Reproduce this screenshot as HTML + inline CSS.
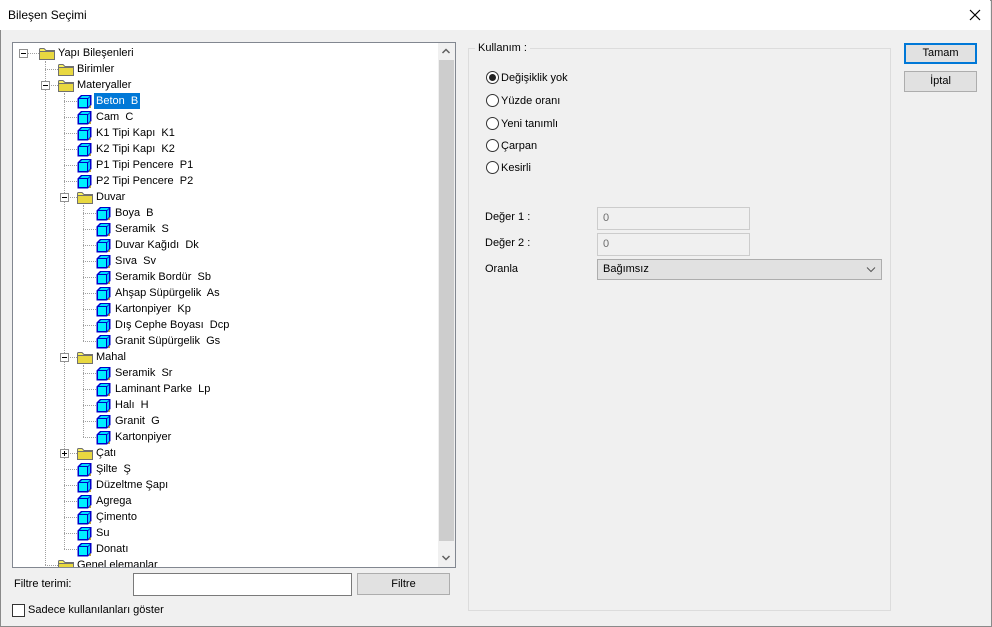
<!DOCTYPE html>
<html><head><meta charset="utf-8"><style>
body{margin:0;width:992px;height:627px;background:#f0f0f0;font-family:"Liberation Sans",sans-serif;font-size:11px;color:#000;position:relative;overflow:hidden}
.a{position:absolute}
#win{position:absolute;left:0;top:0;width:990px;height:625px;border:1px solid #8a8a8a}
#title{position:absolute;left:0;top:0;width:990px;height:30px;background:#fff}
#tree{position:absolute;left:12px;top:42px;width:442px;height:524px;background:#fff;border:1px solid #828790;overflow:hidden}
.row{position:absolute;height:16px;line-height:16px;white-space:pre}
.vl{position:absolute;border-left:1px dotted #a0a0a0;width:0}
.hl{position:absolute;border-top:1px dotted #a0a0a0;height:0}
.ex{position:absolute;width:7px;height:7px;border:1px solid #919191;background:#fff}
.ex:before{content:"";position:absolute;left:1px;top:3px;width:5px;height:1px;background:#000}
.ex.p:after{content:"";position:absolute;left:3px;top:1px;width:1px;height:5px;background:#000}
.btn{position:absolute;background:#e1e1e1;border:1px solid #adadad;text-align:center;box-sizing:border-box}
.inp{position:absolute;background:#fff;border:1px solid #7a7a7a;box-sizing:border-box}
.rad{position:absolute;width:13px;height:13px;border:1px solid #333;border-radius:50%;box-sizing:border-box;background:#fff}
</style></head><body>
<div id="win"></div>
<div id="title"></div>
<div class="a" style="left:8px;top:8px;font-size:12px">Bileşen Seçimi</div>
<svg class="a" style="left:969px;top:9px" width="12" height="12"><path d="M1 1L11 11M11 1L1 11" stroke="#000" stroke-width="1.2"/></svg>

<div id="tree"></div>
<div class="a" style="left:438px;top:43px;width:17px;height:524px;background:#f0f0f0"></div>
<div class="a" style="left:439px;top:60px;width:15px;height:481px;background:#cdcdcd"></div>
<svg class="a" style="left:441px;top:47px" width="10" height="8"><path d="M1.5 6L5 2.5L8.5 6" stroke="#606060" stroke-width="1.5" fill="none"/></svg>
<svg class="a" style="left:441px;top:554px" width="10" height="8"><path d="M1.5 2L5 5.5L8.5 2" stroke="#606060" stroke-width="1.5" fill="none"/></svg>

<div class="a" style="left:14px;top:578px">Filtre terimi:</div>
<div class="inp" style="left:133px;top:573px;width:219px;height:23px"></div>
<div class="btn" style="left:357px;top:573px;width:93px;height:22px;line-height:20px">Filtre</div>
<div class="a" style="left:12px;top:604px;width:13px;height:13px;border:1px solid #333;box-sizing:border-box;background:#fff"></div>
<div class="a" style="left:28px;top:604px">Sadece kullanılanları göster</div>

<div class="a" style="left:468px;top:48px;width:421px;height:561px;border:1px solid #dcdcdc"></div>
<div class="a" style="left:475px;top:42px;background:#f0f0f0;padding:0 3px">Kullanım :</div>
<div class="rad" style="left:486px;top:71px"></div><div class="a" style="left:489px;top:74px;width:7px;height:7px;border-radius:50%;background:#222"></div>
<div class="a" style="left:501px;top:72px">Değişiklik yok</div>
<div class="rad" style="left:486px;top:94px"></div><div class="a" style="left:501px;top:95px">Yüzde oranı</div>
<div class="rad" style="left:486px;top:117px"></div><div class="a" style="left:501px;top:118px">Yeni tanımlı</div>
<div class="rad" style="left:486px;top:139px"></div><div class="a" style="left:501px;top:140px">Çarpan</div>
<div class="rad" style="left:486px;top:161px"></div><div class="a" style="left:501px;top:162px">Kesirli</div>

<div class="a" style="left:485px;top:211px">Değer 1 :</div>
<div class="inp" style="left:597px;top:207px;width:153px;height:23px;border-color:#ccc;background:#f0f0f0;color:#6d6d6d;padding:4px 5px">0</div>
<div class="a" style="left:485px;top:237px">Değer 2 :</div>
<div class="inp" style="left:597px;top:233px;width:153px;height:23px;border-color:#ccc;background:#f0f0f0;color:#6d6d6d;padding:4px 5px">0</div>
<div class="a" style="left:485px;top:263px">Oranla</div>
<div class="inp" style="left:597px;top:259px;width:285px;height:21px;border-color:#adadad;background:#e1e1e1;padding:3px 5px">Bağımsız</div>
<svg class="a" style="left:866px;top:266px" width="10" height="7"><path d="M1 1.5L5 5.5L9 1.5" stroke="#555" fill="none"/></svg>

<div class="btn" style="left:904px;top:43px;width:73px;height:21px;line-height:17px;border:2px solid #0078d7">Tamam</div>
<div class="btn" style="left:904px;top:71px;width:73px;height:21px;line-height:19px">İptal</div>

<script>
var rows=[[0,"Yapı Bileşenleri","f","m"],[1,"Birimler","f"],[1,"Materyaller","f","m"],
[2,"Beton  B","c"],[2,"Cam  C","c"],[2,"K1 Tipi Kapı  K1","c"],[2,"K2 Tipi Kapı  K2","c"],[2,"P1 Tipi Pencere  P1","c"],[2,"P2 Tipi Pencere  P2","c"],
[2,"Duvar","f","m"],[3,"Boya  B","c"],[3,"Seramik  S","c"],[3,"Duvar Kağıdı  Dk","c"],[3,"Sıva  Sv","c"],[3,"Seramik Bordür  Sb","c"],[3,"Ahşap Süpürgelik  As","c"],[3,"Kartonpiyer  Kp","c"],[3,"Dış Cephe Boyası  Dcp","c"],[3,"Granit Süpürgelik  Gs","c"],
[2,"Mahal","f","m"],[3,"Seramik  Sr","c"],[3,"Laminant Parke  Lp","c"],[3,"Halı  H","c"],[3,"Granit  G","c"],[3,"Kartonpiyer","c"],
[2,"Çatı","f","p"],[2,"Şilte  Ş","c"],[2,"Düzeltme Şapı","c"],[2,"Agrega","c"],[2,"Çimento","c"],[2,"Su","c"],[2,"Donatı","c"],[1,"Genel elemanlar","f"]];
var T=document.getElementById("tree"),h="";
var ox=12,oy=42;
function lx(l){return l==0?22:25+19*l}
var V=[[1,60,564],[2,92,548],[3,204,340],[3,364,436]];
V.forEach(function(v){h+='<div class="vl" style="left:'+(lx(v[0])-ox)+'px;top:'+(v[1]-oy)+'px;height:'+(v[2]-v[1])+'px"></div>'});
var cube='<svg width="15" height="15"><path d="M0.5 4.5L4 1H14.5V11L11 14.5H0.5Z" fill="#0000c8"/><rect x="2" y="5" width="8" height="8" fill="#00f0ff"/><path d="M3 4L5 2H13L11 4Z" fill="#00e0ff"/><path d="M11 5L13 3V11L11 13Z" fill="#00c8ff"/><path d="M12 13L14 11V14H12Z" fill="#c0a040"/></svg>';
var fold='<svg width="18" height="14"><path d="M1.5 3.5V13.5H16.5V4.5H8L6 2.5H2Z" fill="#f8f060" stroke="#707070"/><path d="M1.5 5.5H16.5" stroke="#707070"/><rect x="2" y="6" width="14" height="7" fill="#e8d840"/></svg>';
rows.forEach(function(r,i){
 var l=r[0],cy=52+16*i,ix=38+19*l,tx=ix+19;
 var px=l==0?22:lx(l);
 h+='<div class="hl" style="left:'+(px-ox)+'px;top:'+(cy-oy)+'px;width:'+(ix-px)+'px"></div>';
 if(r[3]) h+='<div class="ex '+(r[3]=="p"?"p":"")+'" style="left:'+(px-4-ox)+'px;top:'+(cy-4-oy)+'px"></div>';
 h+='<div class="row" style="left:'+(ix-ox-(r[2]=="f"?1:0))+'px;top:'+(cy-7-oy)+'px">'+(r[2]=="f"?fold:cube)+'</div>';
 var sel=i==3?'background:#0078d7;color:#fff;padding:0 2px;margin-left:-2px;':'';
 h+='<div class="row" style="left:'+(tx-ox)+'px;top:'+(cy-8-oy)+'px;'+sel+'">'+r[1]+'</div>';
});
T.innerHTML=h;
</script>
</body></html>
